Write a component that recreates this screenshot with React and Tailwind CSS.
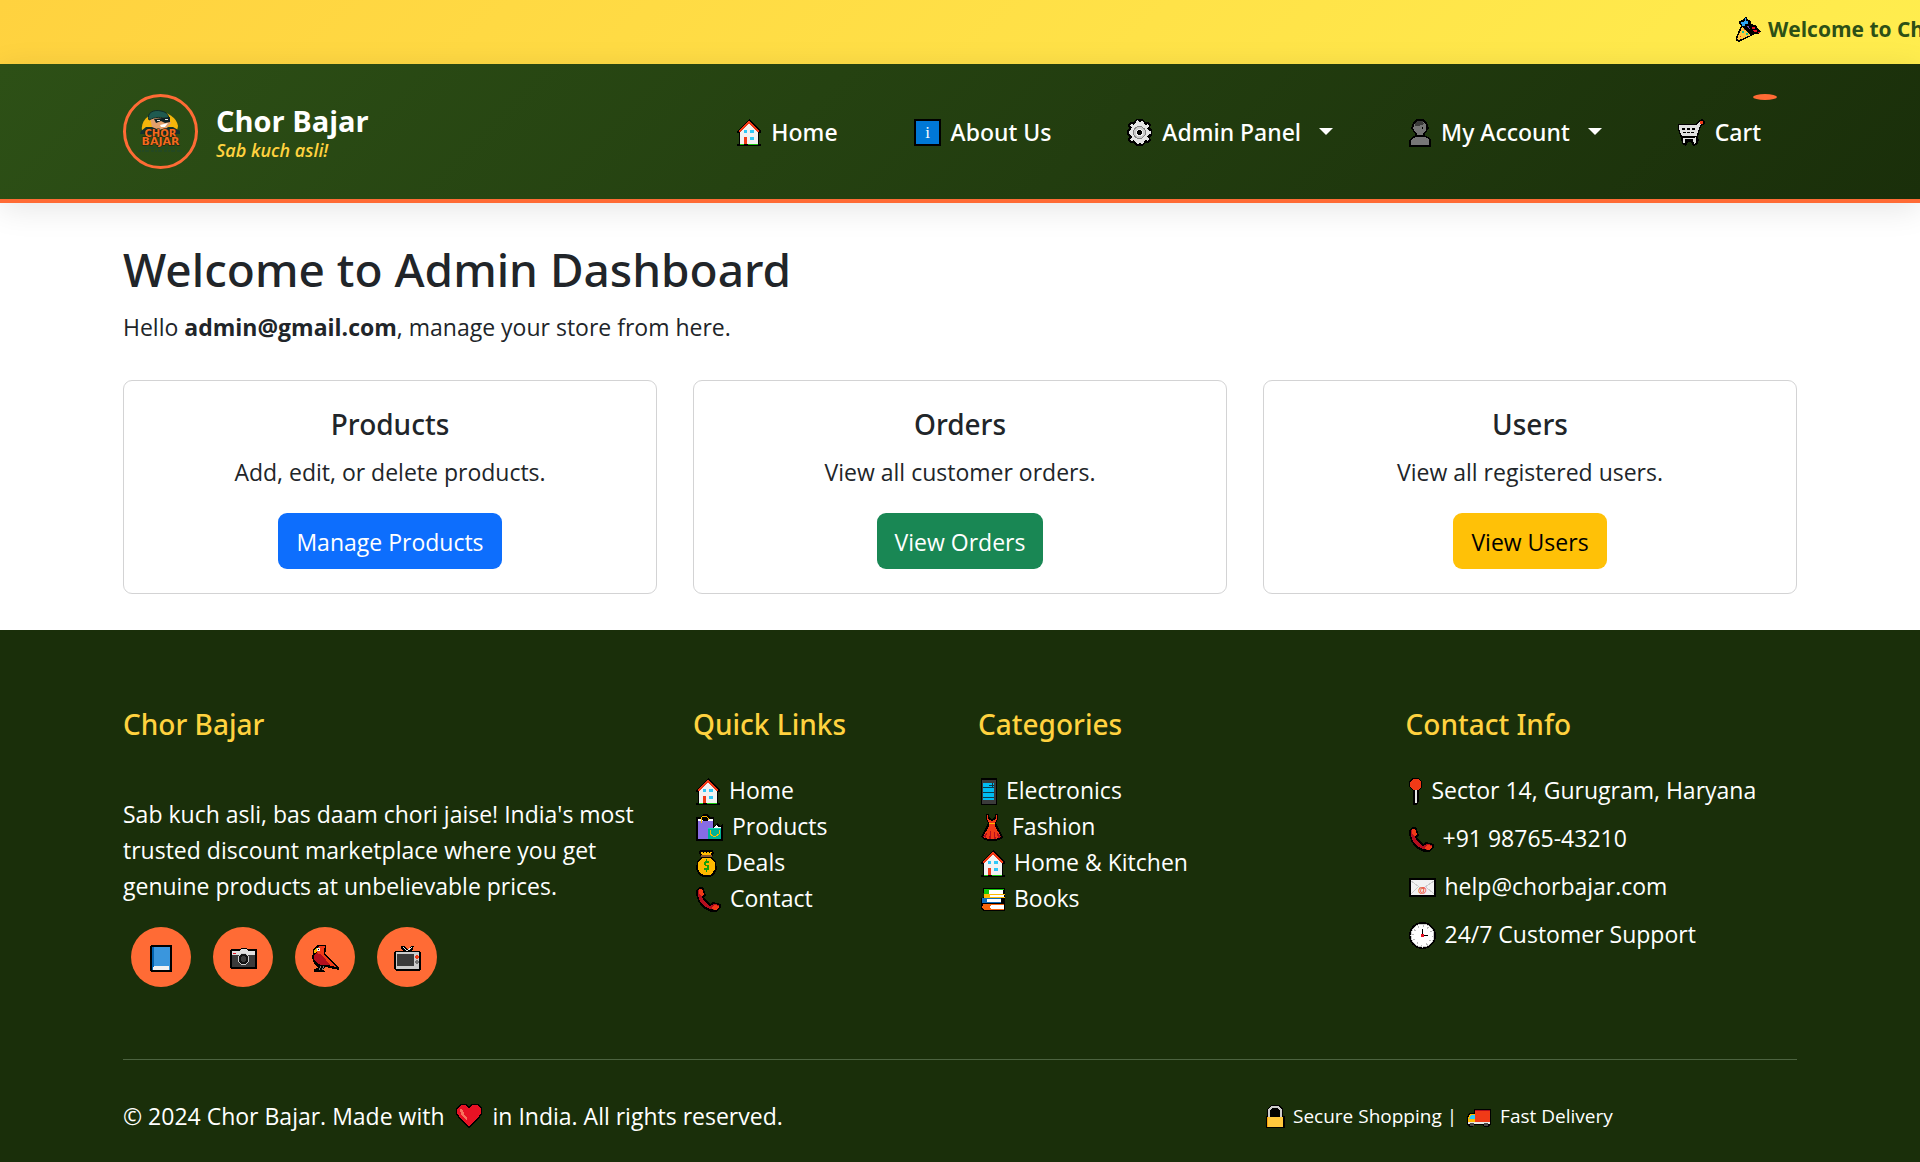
import React from "react";

function Svg({ w, h = 27, className = "", children }) {
  return (
    <svg width={w} height={h} viewBox={`0 0 ${w} ${h}`} shapeRendering="crispEdges" aria-hidden="true" className={`shrink-0 ${className}`}>
      {children}
    </svg>
  );
}

const House = (p) => (
  <Svg w={24} {...p}>
    <path d="M12 0L24 12V14H22V25H24V27H0V25H2V14H0V12Z" fill="#000" />
    <path d="M12 4L21 13V25H3V13Z" fill="#f2f2f2" />
    <path d="M2 13L12 3L22 13" fill="none" stroke="#f03a17" strokeWidth="2" />
    <path d="M7 11h3v3H7zM13 11h4v3h-4zM13 18h4v3h-4z" fill="#30c8f8" />
    <path d="M7 18h3v7H7z" fill="#f03a17" />
    <path d="M3 25h4v1H3zM11 25h10v1H11z" fill="#16c60c" />
  </Svg>
);

const Info = (p) => (
  <Svg w={27} {...p}>
    <rect width="27" height="27" fill="#000" />
    <rect x="2" y="2" width="23" height="23" fill="#0078d7" />
    <text x="13.5" y="19" textAnchor="middle" fontSize="17" fill="#fff" fontFamily="Liberation Serif, serif">i</text>
  </Svg>
);

const Gear = (p) => (
  <Svg w={25} {...p}>
    <path d="M9 0H16L18 3L22 3L24 6L23 9L25 11V16L23 18L24 21L22 24L18 24L16 27H9L7 24L3 24L1 21L2 18L0 16V11L2 9L1 6L3 3L7 3Z" fill="#000" />
    <path d="M10 1H11L12 3H14L15 1L17 4L18 6L21 5L22 7L20 9L22 12L24 12V15L22 15L20 18L22 20L21 22L18 21L17 23L15 25L13 24L11 25L9 24L7 21L4 22L3 20L5 18L3 15L2 15V12L3 12L5 9L3 7L4 5L7 6L9 3Z" fill="#e6e6e6" />
    <circle cx="12.5" cy="13.500" r="9" fill="#e6e6e6" />
    <circle cx="12.5" cy="13.500" r="6" fill="#ccc" stroke="#858585" strokeWidth="1" />
    <circle cx="12.5" cy="13.500" r="3" fill="#000" stroke="#f2f2f2" strokeWidth="1" />
  </Svg>
);

const Person = (p) => (
  <Svg w={22} h={28} {...p}>
    <path d="M8 0H14L18 3L19 7L20 9L18 12L15 16L19 18L22 21V28H0V21L3 18L7 16L4 12L2 10L3 7L4 3Z" fill="#000" />
    <path d="M8 2H14L17 6V11L14 15V17L20 20V26H2V21L8 17V15L5 11L3 9L5 7L6 4Z" fill="#767676" />
    <path d="M8 2H14L15 5L10 7H6L6 4Z" fill="#3b3b3b" />
    <path d="M6 17H16V18H6ZM13 8H14V10H13ZM6 14L8 16H14L16 14V17H6Z" fill="#000" />
  </Svg>
);

const Cart = (p) => (
  <Svg w={27} h={27} {...p}>
    <path d="M0 5H18L21 1L24 0L27 2V5L23 7L20 18L21 21L19 26L15 27L13 23H10L8 27L4 25L3 19L0 11Z" fill="#000" />
    <path d="M1 6H19L21 3L24 2V5L22 6L18 19V24L16 25L15 20H7V24H5V19H17L18 17H4L1 10Z" fill="#e0e0e0" />
    <path d="M4 9H7V11H4ZM9 9H12V11H9ZM14 9H17V11H14ZM5 13H8V14H5ZM9 13H12V14H9ZM13 13H16V14H13ZM6 18H17V19H6Z" fill="#000" />
    <rect x="22" y="2" width="3" height="3" fill="#f03a17" />
  </Svg>
);

const Party = (p) => (
  <Svg w={25} h={25} {...p}>
    <path d="M9 0H11V2L15 4V7L19 8L21 10L25 15L22 17H19L13 20L3 25L0 24V20L5 9L3 7V4L7 3Z" fill="#000" />
    <path d="M6 10L15 18L3 23L1 22Z" fill="#ffc83d" />
    <path d="M5 5H8V4H12V7H9V9H6ZM9 1H10V4H9Z" fill="#30a8f8" />
    <path d="M17 13H21V15H18ZM16 10H19V12H16ZM22 15H24V16H22Z" fill="#e81224" />
    <path d="M10 9H13L14 12L11 10Z" fill="#744da9" />
    <path d="M6 14h2v2H6zM10 16h2v2h-2z" fill="#16c6a0" />
    <path d="M4 19h1v1H4zM8 12h1v1H8z" fill="#f03a17" />
  </Svg>
);

const Bags = (p) => (
  <Svg w={27} h={27} {...p}>
    <path d="M0 3H4L7 0H12L14 3H18V12L21 9L24 12L27 9V27H0Z" fill="#000" />
    <path d="M2 7H17V14H12V25H2Z" fill="#886ce4" />
    <path d="M2 5H5L7 7H2ZM12 6L14 5L17 5V7H12ZM18 13L20 11L22 13H25V15H18Z" fill="#fff" />
    <path d="M5 9V4L7 2H10L12 4V6" fill="none" stroke="#ffb900" strokeWidth="1" />
    <rect x="12" y="15" width="13" height="10" fill="#00b294" />
    <rect x="12" y="14" width="13" height="1" fill="#16d6b6" />
    <path d="M14 16V20L17 22H20L23 20V16" fill="none" stroke="#ffb900" strokeWidth="1" />
  </Svg>
);

const MoneyBag = (p) => (
  <Svg w={21} {...p}>
    <path d="M4 0H17L18 3L16 7L20 12L21 19L18 25L14 27H7L3 25L0 19L1 12L5 7L3 3Z" fill="#000" />
    <path d="M5 2H16L15 5H6ZM6 8H15L19 13V19L16 24L13 25H8L5 24L2 19V13Z" fill="#ffb900" />
    <path d="M5 5H16V7H5Z" fill="#8e562e" />
    <path d="M7 2h1v1H7zM10 2h1v1h-1zM13 2h1v1h-1z" fill="#000" />
    <path d="M10 9h1v2h2v2h-3v2h2l1 1v3l-1 1h-1v2h-1v-2H8v-2h3v-2H9l-1-1v-3l1-1h1z" fill="#16a00c" />
  </Svg>
);

const Phone = (p) => (
  <Svg w={25} h={25} {...p}>
    <path d="M3 0H7L10 8L8 11L14 17L17 15L25 17V21L20 25H15L7 21L2 14L0 7V3Z" fill="#000" />
    <path d="M3 2H6L8 7L6 10L8 14L14 19L18 17L23 18V21L19 23L14 22L8 19L4 14L2 8V4Z" fill="#b50e1e" />
    <path d="M3 2H6L8 7L6 9L3 7V3ZM16 20L19 18L23 19V21L20 23L16 22Z" fill="#f03a17" />
  </Svg>
);

const Mobile = (p) => (
  <Svg w={16} {...p}>
    <rect width="16" height="27" rx="1" fill="#000" />
    <rect x="1" y="2" width="14" height="24" fill="#3b3b3b" />
    <rect x="2" y="5" width="11" height="17" fill="#00bcf2" />
    <path d="M2 9h11v1H2zM2 14h11v1H2zM2 19h11v1H2zM11 5h1v4h-1zM8 7h5v1H8z" fill="#0b3a4a" />
  </Svg>
);

const Dress = (p) => (
  <Svg w={22} {...p}>
    <path d="M5 0H8V3L11 5L14 3V0H17V5L15 9L17 13L22 23L20 25L15 27H7L2 25L0 23L5 13L7 9L5 5Z" fill="#000" />
    <path d="M6 1H7V5L11 7L15 5V1H16V5L14 9V12L20 23L15 25H7L2 23L8 12V9L6 5Z" fill="#f03a17" />
    <path d="M6 18L5 24L2 23ZM10 15V25H8ZM13 15L15 25H13ZM16 19L20 23L17 24Z" fill="#b50e1e" />
    <rect x="8" y="9" width="6" height="1" fill="#ffb900" />
  </Svg>
);

const Books = (p) => (
  <Svg w={24} h={23} {...p}>
    <path d="M2 0H24V23H2L0 20V10L3 9V6L2 5Z" fill="#000" />
    <path d="M3 1H23V2H8V5H8V6H3Z" fill="#16c60c" />
    <path d="M8 2h14v4H8zM9 7h14v2H9zM6 11h14v4H6zM9 16h14v5H9z" fill="#fff" />
    <path d="M3 6H24V7H9V9H24V10H3Z" fill="#ffb900" />
    <path d="M1 10H20V11H6V14H20V15H1Z" fill="#0f6cbd" />
    <path d="M2 16H23V17H10L8 19L10 21H23V22H3L1 20Z" fill="#f7630c" />
  </Svg>
);

const Pin = (p) => (
  <Svg w={14} {...p}>
    <path d="M4 0H9L13 3V9L10 13V23L8 27H4V13L0 9V3Z" fill="#000" />
    <path d="M5 1H9L12 4V9L9 12H5L1 9V4Z" fill="#f03a17" />
    <rect x="6" y="12" width="2" height="13" fill="#e6e6e6" />
  </Svg>
);

const Mail = (p) => (
  <Svg w={27} h={19} {...p}>
    <rect width="27" height="19" fill="#000" />
    <rect x="2" y="2" width="23" height="15" fill="#f2f2f2" />
    <path d="M2 3L13 11L25 3M2 16L9 9M25 16L17 9" fill="none" stroke="#ccc" strokeWidth="1" />
    <text x="13.5" y="15" textAnchor="middle" fontSize="9" fontWeight="700" fill="#f03a17" fontFamily="Liberation Sans, sans-serif">@</text>
  </Svg>
);

const Clock = (p) => (
  <Svg w={27} {...p}>
    <circle cx="13.5" cy="13.500" r="13.500" fill="#000" />
    <circle cx="13.5" cy="13.500" r="12" fill="#ccc" />
    <circle cx="13.5" cy="13.500" r="11" fill="#fff" />
    <circle cx="13.5" cy="13.500" r="9.500" fill="none" stroke="#bbb" strokeWidth="2" strokeDasharray="1 3.970" />
    <path d="M13 7h1v7h-1zM13 13h6v1h-6z" fill="#000" />
    <rect x="12" y="12" width="3" height="3" fill="#e81224" />
  </Svg>
);

const Book = (p) => (
  <Svg w={22} {...p}>
    <path d="M1 0H22V27H1L0 25V2Z" fill="#000" />
    <rect x="2" y="2" width="18" height="23" fill="#3a96dd" />
    <rect x="2" y="2" width="2" height="23" fill="#0063b1" />
    <path d="M4 21H19V25H3V23Z" fill="#f2f2f2" />
  </Svg>
);

const Camera = (p) => (
  <Svg w={27} h={21} {...p}>
    <path d="M1 1H10L11 0H16L17 1H26L27 2V20L26 21H1L0 20V2Z" fill="#000" />
    <path d="M2 3H9L11 1H16L18 3H25V7H2Z" fill="#e0e0e0" />
    <rect x="2" y="7" width="23" height="12" fill="#3b3b3b" />
    <circle cx="13.5" cy="11" r="5.500" fill="#111" stroke="#ccc" strokeWidth="1" />
    <circle cx="13.5" cy="11" r="3" fill="#3b3b3b" />
    <rect x="3" y="5" width="3" height="1" fill="#e81224" />
  </Svg>
);

const Bird = (p) => (
  <Svg w={27} {...p}>
    <path d="M5 0H14V5L13 9L27 22V25L22 24L14 22L11 24L13 27H2V24L6 23L2 18L0 13L1 8L1 4Z" fill="#000" />
    <path d="M7 1H13L12 5V9L24 22L19 21L13 16L8 12L5 7L6 3Z" fill="#f03a17" />
    <path d="M2 10L5 8L10 10L18 20H9L4 17L2 14Z" fill="#b50e1e" />
    <path d="M2 5L5 3V7L2 8Z" fill="#ffb900" />
    <rect x="5" y="3" width="3" height="3" fill="#f2f2f2" />
    <rect x="6" y="4" width="1" height="1" fill="#000" />
    <path d="M7 25L9 21M10 25L12 21" stroke="#767676" strokeWidth="1" />
  </Svg>
);

const Tv = (p) => (
  <Svg w={27} h={25} {...p}>
    <path d="M7 0L10 0L14 3L17 0H20L19 3L17 5H26L27 7V23L25 25H2L0 23V7L1 5H10L7 3Z" fill="#000" />
    <path d="M9 1L13 5L18 1" fill="none" stroke="#e6e6e6" strokeWidth="1" />
    <path d="M2 6H25V23H2Z" fill="#ccc" />
    <path d="M3 8H20V20H3Z" fill="#3b3b3b" />
    <path d="M22 9h2v1h1v2h-1v1h-2v-1h-1v-2h1z" fill="#f03a17" />
    <path d="M22 14h2v1h1v2h-1v1h-2v-1h-1v-2h1z" fill="#767676" />
  </Svg>
);

const Heart = (p) => (
  <Svg w={26} h={24} {...p}>
    <path d="M4 0H10L13 2L16 0H22L26 4V10L22 16L13 24L4 16L0 10V4Z" fill="#000" />
    <path d="M5 1H9L13 4L17 1H21L25 5V9L21 15L13 22L5 15L1 9V5Z" fill="#e81224" />
    <path d="M4 5L7 6L8 10L11 14V16L8 14L5 10Z" fill="#f8735e" />
  </Svg>
);

const Lock = (p) => (
  <Svg w={19} h={23} {...p}>
    <path d="M6 0H13L17 4V11H19V23H0V11H1V4Z" fill="#000" />
    <path d="M3 12V5L6 2H12L15 5V12" fill="none" stroke="#ccc" strokeWidth="2" />
    <rect x="1" y="12" width="16" height="10" fill="#ffc83d" />
    <rect x="1" y="12" width="1" height="10" fill="#f7a30c" />
  </Svg>
);

const Truck = (p) => (
  <Svg w={24} h={18} {...p}>
    <path d="M7 0H24V15L21 18H17L16 16H7L5 18H2L0 15V8L2 4H7Z" fill="#000" />
    <rect x="8" y="1" width="15" height="12" fill="#f03a17" />
    <rect x="8" y="1" width="15" height="1" fill="#b50e1e" />
    <path d="M3 5H8V13H1V9Z" fill="#ffb900" />
    <path d="M4 6H8V10H2Z" fill="#30c8f8" />
    <rect x="1" y="13" width="22" height="2" fill="#e6e6e6" />
    <circle cx="5" cy="15.500" r="2" fill="#4a4a4a" />
    <circle cx="19" cy="15.500" r="2" fill="#4a4a4a" />
  </Svg>
);

const Logo = () => (
  <svg viewBox="0 0 75 75" className="size-[75px] shrink-0" role="img" aria-label="Chor Bajar logo">
    <circle cx="37.500" cy="37.500" r="36" fill="none" stroke="#ff6b35" strokeWidth="3" />
    <path d="M19 37A18 16 0 0 1 55 32L54 37Z" fill="#f5b50a" />
    <path d="M18 37L23 33H50L57 37V40H17Z" fill="#12322e" />
    <path d="M27 24L45 24L48 29L44 34L36 36L29 33Z" fill="#e3a06c" />
    <path d="M26 26C23 19 31 15 38 17C44 18 47 22 45 26C38 22 32 23 26 26Z" fill="#1f5a50" stroke="#0f2b28" strokeWidth="1" />
    <path d="M31 25L47 23V28L42 29L38 27L33 29Z" fill="#0f2022" />
    <path d="M34 26h3v1h-3zM42 25h3v1h-3z" fill="#dfe8e8" />
    <path d="M37 31L45 29L42 33L38 33Z" fill="#fff" />
    <g fontFamily="DejaVu Sans, sans-serif" fontWeight="700" textAnchor="middle" fill="#f26a1b" stroke="#1b1a12" strokeWidth="1" paintOrder="stroke">
      <text x="37.500" y="43" fontSize="10">CHOR</text>
      <text x="37.500" y="51" fontSize="11">BAJAR</text>
    </g>
    <path d="M21 54H53M15 57H59" stroke="#1f4630" strokeWidth="1" strokeDasharray="3 1 2 1 4 2" />
  </svg>
);

const Caret = () => (
  <svg width="14" height="7" viewBox="0 0 14 7" aria-hidden="true" className="ml-[18px]">
    <path d="M0 0H14L7 7Z" fill="#fff" />
  </svg>
);

const NAV = [
  { label: "Home", Icon: House },
  { label: "About Us", Icon: Info },
  { label: "Admin Panel", Icon: Gear, menu: true },
  { label: "My Account", Icon: Person, menu: true },
  { label: "Cart", Icon: Cart, badge: true },
];

const CARDS = [
  { title: "Products", text: "Add, edit, or delete products.", action: "Manage Products", color: "bg-[#0d6efd] text-white" },
  { title: "Orders", text: "View all customer orders.", action: "View Orders", color: "bg-[#198754] text-white" },
  { title: "Users", text: "View all registered users.", action: "View Users", color: "bg-[#ffc107] text-black" },
];

const QUICK = [["Home", House], ["Products", Bags], ["Deals", MoneyBag], ["Contact", Phone]];
const CATEGORIES = [["Electronics", Mobile], ["Fashion", Dress], ["Home & Kitchen", House], ["Books", Books]];
const CONTACT = [["Sector 14, Gurugram, Haryana", Pin], ["+91 98765-43210", Phone], ["help@chorbajar.com", Mail], ["24/7 Customer Support", Clock]];
const SOCIAL = [["Facebook", Book], ["Instagram", Camera], ["Twitter", Bird], ["YouTube", Tv]];

function Container({ className = "", children }) {
  return <div className={`mx-auto w-full max-w-[1710px] px-[18px] ${className}`}>{children}</div>;
}

function FooterTitle({ children }) {
  return <h2 className="font-['Noto_Sans'] text-[28px] font-medium leading-9 text-[#ffd23f]">{children}</h2>;
}

function LinkList({ items }) {
  return (
    <ul className="mt-[30px]">
      {items.map(([label, Icon]) => (
        <li key={label}>
          <a href="#" className="flex h-9 items-center gap-[9px] pl-[3px] whitespace-nowrap">
            <Icon className="mt-0.5" />
            {label}
          </a>
        </li>
      ))}
    </ul>
  );
}

export default function App() {
  return (
    <div className="flex min-h-screen flex-col overflow-x-hidden bg-white font-['Open_Sans','Noto_Sans',sans-serif] text-[23px] leading-9 text-[#212529]">
      <div className="h-16 overflow-hidden bg-linear-135 from-[#ffd23f] to-[#ffed4e]">
        <p className="flex h-[58px] items-center gap-[7px] pl-[90%] text-[21px] font-bold whitespace-nowrap text-[#2d5016]">
          <Party className="ml-2" />
          Welcome to Chor Bajar
        </p>
      </div>

      <header className="relative border-b-4 border-[#ff6b35] bg-linear-135 from-[#2d5016] to-[#1a2f0a] py-[30px] shadow-[0_6px_30px_rgba(0,0,0,0.1)]">
        <Container className="flex items-center justify-between">
          <a href="#" className="flex items-center gap-[18px]">
            <Logo />
            <span className="flex flex-col">
              <span className="pt-px text-[29px] font-bold leading-9 text-white">Chor Bajar</span>
              <span className="text-[18px] font-semibold leading-[22px] text-[#ffd23f] italic">Sab kuch asli!</span>
            </span>
          </a>
          <nav className="flex gap-1 font-['Noto_Sans'] font-medium text-white">
            {NAV.map(({ label, Icon, menu, badge }) => {
              const inner = (
                <>
                  <Icon className="mt-0.5 mr-[10px]" />
                  {label}
                  {menu && <Caret />}
                  {badge && <span className="absolute -top-0.5 right-5 h-[6px] w-6 rounded-[50%] bg-[#ff6b35]" />}
                </>
              );
              return menu ? (
                <button key={label} type="button" className="relative -my-2 flex items-center px-9 py-[18px]">{inner}</button>
              ) : (
                <a key={label} href="#" className="relative -my-2 flex items-center px-9 py-[18px]">{inner}</a>
              );
            })}
          </nav>
        </Container>
      </header>

      <main>
        <Container className="py-9">
          <h1 className="font-['Noto_Sans'] text-[46px] font-medium leading-[60px]">Welcome to Admin Dashboard</h1>
          <p className="mt-[10px]">
            Hello <strong className="font-bold">admin@gmail.com</strong>, manage your store from here.
          </p>
          <div className="mt-[35px] grid grid-cols-3 gap-9">
            {CARDS.map((c) => (
              <section key={c.title} className="flex flex-col items-center rounded-[9px] border border-[#d3d3d4] px-6 pt-[25px] pb-6 text-center">
                <h2 className="font-['Noto_Sans'] text-[28px] font-medium leading-9">{c.title}</h2>
                <p className="mt-3">{c.text}</p>
                <a href="#" className={`mt-[23px] rounded-[9px] px-[18px] pt-[11px] pb-[9px] ${c.color}`}>{c.action}</a>
              </section>
            ))}
          </div>
        </Container>
      </main>

      <footer className="grow bg-[#1a2f0a] pt-[76px] pb-[29px] text-white">
        <Container>
          <div className="grid grid-cols-12 gap-x-9">
            <div className="col-span-4">
              <FooterTitle>Chor Bajar</FooterTitle>
              <p className="mt-[54px]">
                Sab kuch asli, bas daam chori jaise! India's most trusted discount marketplace where you get genuine products at unbelievable prices.
              </p>
              <div className="mt-[23px] ml-2 flex gap-[22px]">
                {SOCIAL.map(([label, Icon]) => (
                  <a key={label} href="#" aria-label={label} className="flex size-[60px] items-center justify-center rounded-full bg-[#ff6b35]">
                    <Icon className="mt-0.5" />
                  </a>
                ))}
              </div>
            </div>
            <div className="col-span-2">
              <FooterTitle>Quick Links</FooterTitle>
              <LinkList items={QUICK} />
            </div>
            <div className="col-span-3">
              <FooterTitle>Categories</FooterTitle>
              <LinkList items={CATEGORIES} />
            </div>
            <div className="col-span-3">
              <FooterTitle>Contact Info</FooterTitle>
              <ul className="mt-[30px] flex flex-col gap-3">
                {CONTACT.map(([label, Icon]) => (
                  <li key={label} className="flex h-9 items-center gap-[9px] pl-[3px] whitespace-nowrap">
                    <Icon className="mt-0.5" />
                    {label}
                  </li>
                ))}
              </ul>
            </div>
          </div>
          <div className="mt-[72px] grid grid-cols-12 gap-x-9 border-t border-[#4c6340] pt-[37px]">
            <p className="col-span-8 flex items-center">
              © 2024 Chor Bajar. Made with
              <Heart className="mx-[11px]" />
              in India. All rights reserved.
            </p>
            <p className="col-span-4 flex items-center pt-px pl-[3px] text-[19px]">
              <Lock className="mr-2" />
              Secure Shopping |
              <Truck className="mt-1 mr-[9px] ml-[10px]" />
              Fast Delivery
            </p>
          </div>
        </Container>
      </footer>
    </div>
  );
}
